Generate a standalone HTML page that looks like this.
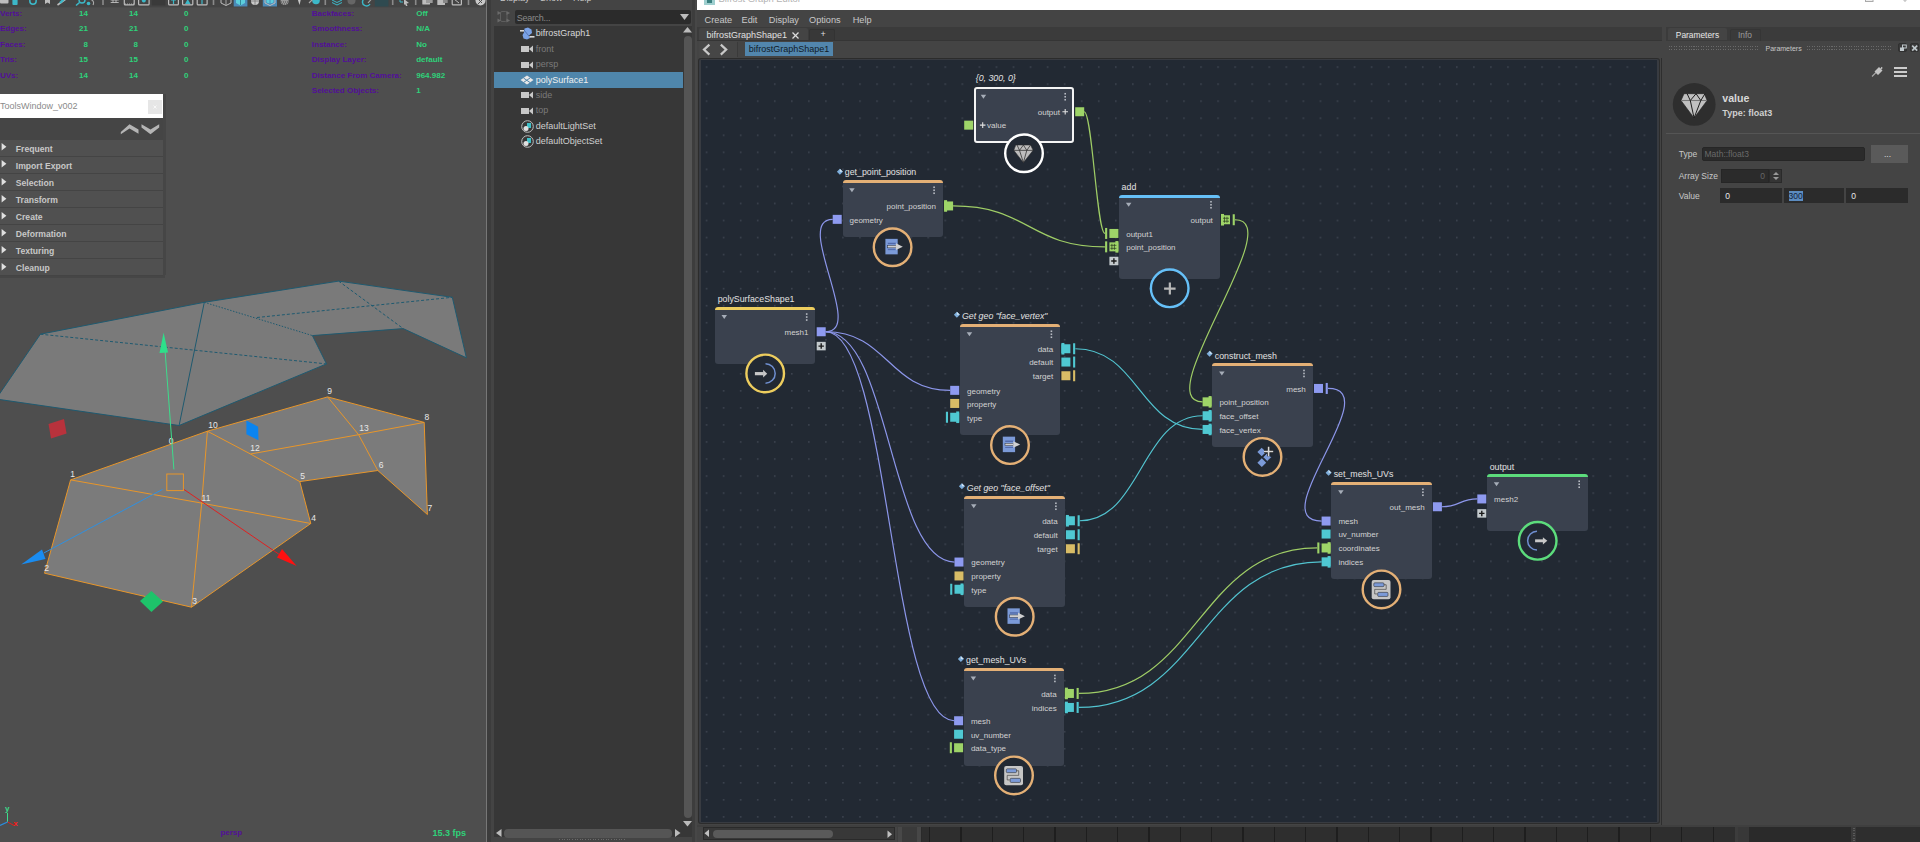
<!DOCTYPE html><html><head><meta charset="utf-8"><style>
*{margin:0;padding:0;box-sizing:border-box}
html,body{width:1920px;height:842px;overflow:hidden;background:#444;font-family:"Liberation Sans", sans-serif;}
.abs{position:absolute}
.t{position:absolute;white-space:nowrap;line-height:1}
</style></head><body>
<div class="abs" style="left:0px;top:0px;width:487px;height:842px;background:#4e4e4e;"></div>
<div class="abs" style="left:0px;top:0px;width:487px;height:7px;background:#444;"></div>
<div class="abs" style="left:0px;top:7px;width:487px;height:1px;background:#4a4a4a;"></div>
<svg class="abs" style="left:0;top:0" width="487" height="7"><rect x="0" y="-2" width="8.5" height="5.5" rx="1" fill="#bdbdbd"/><rect x="12.4" y="-2" width="5.200000000000001" height="7" rx="1" fill="#3cb8c8"/><circle cx="33" cy="1" r="3.2" fill="none" stroke="#3cb8c8" stroke-width="1.5"/><polygon points="45,-2 50,-2 50,4 47.5,2.5 45,4" fill="#bdbdbd"/><path d="M57.5,5 L66,-1" stroke="#bdbdbd" stroke-width="1.6"/><path d="M60,3 L65,-2" stroke="#3cb8c8" stroke-width="2.2"/><circle cx="82" cy="0" r="3" fill="none" stroke="#3cb8c8" stroke-width="1.4"/><path d="M79.5,2.5 L76,5.5" stroke="#3cb8c8" stroke-width="1.6"/><circle cx="88.5" cy="3.5" r="1.8" fill="#3cb8c8"/><path d="M90,-1 Q95,1 93,5" stroke="#aaa" stroke-width="1.1" fill="none"/><rect x="102.2" y="-1" width="1.6" height="6" fill="#8a8a8a"/><path d="M110.7,0 h8 M110.7,2.5 h8 M113,-2 v5 M116,-2 v5" stroke="#bdbdbd" stroke-width="0.9"/><rect x="124.3" y="-2" width="9.90000000000001" height="6.9" rx="1" fill="none" stroke="#bdbdbd" stroke-width="1.2"/><path d="M125,4 h9" stroke="#bdbdbd" stroke-width="0.8" stroke-dasharray="1,1"/><rect x="138.6" y="-2" width="10.49999999999999" height="6.9" rx="1" fill="none" stroke="#bdbdbd" stroke-width="1.2"/><circle cx="143.8" cy="0.5" r="2" fill="#3cb8c8"/><rect x="151.7" y="-2" width="13.700000000000017" height="7.5" rx="1" fill="#3a3a3a"/><rect x="168.6" y="-2" width="9.8" height="6.9" rx="1" fill="none" stroke="#bdbdbd" stroke-width="1.2"/><path d="M171,0 h5 M173.5,-2 v6" stroke="#3cb8c8" stroke-width="1.2"/><rect x="182.6" y="-2" width="10.200000000000006" height="6.9" rx="1" fill="none" stroke="#bdbdbd" stroke-width="1.2"/><polygon points="185,4 190.5,4 187.7,-1" fill="#3cb8c8"/><rect x="197.2" y="-2" width="9.899999999999995" height="6.9" rx="1" fill="none" stroke="#bdbdbd" stroke-width="1.2"/><path d="M199.5,-1 h5 M202,-1 v5" stroke="#3cb8c8" stroke-width="1.2"/><rect x="212.7" y="-1" width="1.6" height="6" fill="#8a8a8a"/><polygon points="221,-2 231,-2 231,3 226,5.5 221,3" fill="none" stroke="#bdbdbd" stroke-width="1"/><path d="M226,-2 v7" stroke="#bdbdbd" stroke-width="0.8"/><rect x="233.7" y="-2" width="13.700000000000017" height="8.5" rx="0" fill="#4a8ab8"/><polygon points="236,-2 245,-2 245,3 240.5,5.5 236,3" fill="#5ccfdc"/><path d="M240.5,-2 v7" stroke="#2a7a88" stroke-width="0.8"/><circle cx="255" cy="1" r="4" fill="#c8c8c8"/><path d="M255,-3 v8 M251,1 h8" stroke="#777" stroke-width="0.8"/><rect x="262.8" y="-2" width="14.199999999999989" height="8.5" rx="0" fill="#4a8ab8"/><polygon points="265,-2 275,-2 275,3 270,5.5 265,3" fill="none" stroke="#bdbdbd" stroke-width="1"/><polygon points="266.5,-1 269.5,-1 269.5,3.5 266.5,2.5" fill="#5ccfdc"/><polygon points="270.5,-1 273.5,-1 273.5,2.5 270.5,3.5" fill="#5ccfdc"/><circle cx="284.6" cy="1" r="4" fill="#9a9a9a"/><path d="M281,-1 h7 M281,2 h7 M282,4 h5" stroke="#444" stroke-width="0.9" stroke-dasharray="1,1"/><polygon points="297.3,-2 301.2,-2 299.5,5" fill="#c8c8c8"/><circle cx="316" cy="0.5" r="3.8" fill="#3cb8c8"/><path d="M309,3 L313,-1" stroke="#aaa" stroke-width="1.2"/><rect x="324.5" y="-1" width="1.6" height="6" fill="#8a8a8a"/><path d="M332,2.5 L337,5 L342,2.5 M332,0 L337,2.5 L342,0" stroke="#3cb8c8" stroke-width="1" fill="none"/><circle cx="351.5" cy="0.5" r="4" fill="#666"/><path d="M367,-2 A4,4 0 1 0 370,4" stroke="#3cb8c8" stroke-width="1.4" fill="none"/><path d="M368,3 L371.5,-1" stroke="#aaa" stroke-width="1.1"/><rect x="374.8" y="-2" width="13.599999999999966" height="8.5" rx="0" fill="#2f4a50"/><rect x="391.9" y="-1" width="1.6" height="6" fill="#8a8a8a"/><path d="M400,-1 v3 h3" stroke="#3cb8c8" stroke-width="1" fill="none"/><polygon points="404,-1 409,3 406.5,3.5 407.5,6 406,6 405,4 404,5" fill="#bdbdbd"/><rect x="414.9" y="-1" width="1.6" height="6" fill="#8a8a8a"/><rect x="422.3" y="-2" width="7.699999999999989" height="6.5" rx="0.5" fill="#bdbdbd"/><rect x="426" y="-2" width="6.699999999999989" height="5" rx="0.5" fill="#9a9a9a"/><rect x="437.3" y="-2" width="7.699999999999989" height="7" rx="0.5" fill="#bdbdbd"/><rect x="443" y="-2" width="4.699999999999989" height="5" rx="0.5" fill="#888"/><rect x="452.20000000000005" y="-2" width="9.199999999999978" height="6.9" rx="1" fill="none" stroke="#bdbdbd" stroke-width="1.2"/><path d="M454,-1 L459,3" stroke="#bdbdbd" stroke-width="1"/><rect x="467.7" y="-1" width="1.6" height="6" fill="#8a8a8a"/><circle cx="480.5" cy="0.5" r="5" fill="#c8c8c8"/><path d="M477,-2 L482,3 M484,-2 L478,4" stroke="#444" stroke-width="0.9"/></svg>
<div class="abs" style="left:486px;top:0px;width:1px;height:842px;background:#777;"></div>
<div class="abs" style="left:487px;top:0px;width:4px;height:842px;background:#3c3c3c;"></div>
<div class="abs" style="left:491px;top:0px;width:3px;height:842px;background:#444;"></div>
<svg class="abs" style="left:0;top:0" width="487" height="842" viewBox="0 0 487 842"><polygon points="-4,399 40.4,334.2 204.3,302.3 338.6,281.1 452.3,297.3 466.4,357.8 403.2,328.6 312.4,335.6 326.5,363.9 179.1,425.5" fill="#7a7a7a" stroke="#1f5a70" stroke-width="1"/><line x1="204.3" y1="302.3" x2="179.1" y2="425.5" stroke="#1f5a70" stroke-width="1"/><line x1="204.3" y1="302.3" x2="312.4" y2="335.6" stroke="#1f5a70" stroke-width="1" stroke-dasharray="1.5,1.5"/><line x1="338.6" y1="281.1" x2="403.2" y2="328.6" stroke="#1f5a70" stroke-width="1" stroke-dasharray="3,2"/><line x1="40.4" y1="334.2" x2="326.5" y2="363.9" stroke="#1f5a70" stroke-width="1" stroke-dasharray="3,2"/><line x1="257" y1="317.5" x2="452.3" y2="297.3" stroke="#1f5a70" stroke-width="1" stroke-dasharray="3,2"/><polygon points="70.6,479.9 207.4,431.2 327.6,396.9 424.2,422.4 427.4,514.5 377.8,470.5 299.8,481.6 310.8,523.5 191.5,607.2 44.5,573.2" fill="#7b7b7b" stroke="#e8962a" stroke-width="1"/><line x1="70.6" y1="479.9" x2="201.7" y2="503.1" stroke="#e8962a" stroke-width="1"/><line x1="201.7" y1="503.1" x2="310.8" y2="523.5" stroke="#e8962a" stroke-width="1"/><line x1="207.4" y1="431.2" x2="201.7" y2="503.1" stroke="#e8962a" stroke-width="1"/><line x1="201.7" y1="503.1" x2="191.5" y2="607.2" stroke="#e8962a" stroke-width="1"/><line x1="207.4" y1="431.2" x2="250.5" y2="454" stroke="#e8962a" stroke-width="1"/><line x1="250.5" y1="454" x2="299.8" y2="481.6" stroke="#e8962a" stroke-width="1"/><line x1="250.5" y1="454" x2="358.6" y2="434.7" stroke="#e8962a" stroke-width="1"/><line x1="358.6" y1="434.7" x2="424.2" y2="422.4" stroke="#e8962a" stroke-width="1"/><line x1="327.6" y1="396.9" x2="358.6" y2="434.7" stroke="#e8962a" stroke-width="1"/><line x1="358.6" y1="434.7" x2="377.8" y2="470.5" stroke="#e8962a" stroke-width="1"/><text x="171" y="444.4" font-size="8.5" fill="#e8e8e8" font-family="Liberation Sans" text-anchor="middle">0</text><text x="72.7" y="477.2" font-size="8.5" fill="#e8e8e8" font-family="Liberation Sans" text-anchor="middle">1</text><text x="46.6" y="570.7" font-size="8.5" fill="#e8e8e8" font-family="Liberation Sans" text-anchor="middle">2</text><text x="194.6" y="604" font-size="8.5" fill="#e8e8e8" font-family="Liberation Sans" text-anchor="middle">3</text><text x="313.7" y="520.5" font-size="8.5" fill="#e8e8e8" font-family="Liberation Sans" text-anchor="middle">4</text><text x="302.7" y="479.2" font-size="8.5" fill="#e8e8e8" font-family="Liberation Sans" text-anchor="middle">5</text><text x="381" y="468.1" font-size="8.5" fill="#e8e8e8" font-family="Liberation Sans" text-anchor="middle">6</text><text x="429.9" y="511.2" font-size="8.5" fill="#e8e8e8" font-family="Liberation Sans" text-anchor="middle">7</text><text x="426.8" y="419.5" font-size="8.5" fill="#e8e8e8" font-family="Liberation Sans" text-anchor="middle">8</text><text x="329.7" y="393.7" font-size="8.5" fill="#e8e8e8" font-family="Liberation Sans" text-anchor="middle">9</text><text x="212.9" y="427.8" font-size="8.5" fill="#e8e8e8" font-family="Liberation Sans" text-anchor="middle">10</text><text x="206" y="500.9" font-size="8.5" fill="#e8e8e8" font-family="Liberation Sans" text-anchor="middle">11</text><text x="254.9" y="451" font-size="8.5" fill="#e8e8e8" font-family="Liberation Sans" text-anchor="middle">12</text><text x="364" y="431.4" font-size="8.5" fill="#e8e8e8" font-family="Liberation Sans" text-anchor="middle">13</text><line x1="173.9" y1="469.4" x2="165" y2="350" stroke="#3ddc8c" stroke-width="1"/><polygon points="163.6,332.6 159.5,353 168,352.5" fill="#2ee08a"/><rect x="166.8" y="474" width="16.6" height="16.6" fill="none" stroke="#e8962a" stroke-width="1"/><line x1="162.5" y1="489.4" x2="43.8" y2="553" stroke="#2f90e0" stroke-width="1"/><polygon points="21.2,564.4 42,549.5 45.5,559" fill="#1a8cf0"/><line x1="183.9" y1="489.4" x2="278.9" y2="554.2" stroke="#e02020" stroke-width="1"/><polygon points="296.7,566 277,557.5 282,549" fill="#ff1010"/><polygon points="140,601 151.4,591 163,601.5 151.4,612" fill="#1ec36a"/><polygon points="48.5,424 64,419 66.6,433.6 51,438.6" fill="#b8323c"/><polygon points="246.4,420.6 258.1,426.7 258.5,440.2 246.4,434.3" fill="#0a84f0"/><line x1="7.5" y1="813" x2="7.5" y2="822" stroke="#3ddc8c" stroke-width="1"/><line x1="7.5" y1="822" x2="14" y2="825.5" stroke="#e02020" stroke-width="1"/><line x1="7.5" y1="822" x2="0" y2="825.5" stroke="#2a8ee0" stroke-width="1.2"/><text x="5" y="810.5" font-size="8" font-weight="700" fill="#3ddc8c" font-family="Liberation Sans">y</text><text x="13.2" y="825.5" font-size="8" font-weight="700" fill="#ff1a1a" font-family="Liberation Sans">x</text></svg>
<div class="t" style="left:0px;top:10.00px;font-size:8px;color:#520e98;font-weight:700;font-style:normal;height:8px;">Verts:</div>
<div class="t" style="right:1832px;top:10.00px;font-size:8px;color:#2ed27a;font-weight:700;font-style:normal;height:8px;text-align:right;">14</div>
<div class="t" style="right:1782px;top:10.00px;font-size:8px;color:#2ed27a;font-weight:700;font-style:normal;height:8px;text-align:right;">14</div>
<div class="t" style="right:1731.5px;top:10.00px;font-size:8px;color:#2ed27a;font-weight:700;font-style:normal;height:8px;text-align:right;">0</div>
<div class="t" style="left:0px;top:25.40px;font-size:8px;color:#520e98;font-weight:700;font-style:normal;height:8px;">Edges:</div>
<div class="t" style="right:1832px;top:25.40px;font-size:8px;color:#2ed27a;font-weight:700;font-style:normal;height:8px;text-align:right;">21</div>
<div class="t" style="right:1782px;top:25.40px;font-size:8px;color:#2ed27a;font-weight:700;font-style:normal;height:8px;text-align:right;">21</div>
<div class="t" style="right:1731.5px;top:25.40px;font-size:8px;color:#2ed27a;font-weight:700;font-style:normal;height:8px;text-align:right;">0</div>
<div class="t" style="left:0px;top:40.80px;font-size:8px;color:#520e98;font-weight:700;font-style:normal;height:8px;">Faces:</div>
<div class="t" style="right:1832px;top:40.80px;font-size:8px;color:#2ed27a;font-weight:700;font-style:normal;height:8px;text-align:right;">8</div>
<div class="t" style="right:1782px;top:40.80px;font-size:8px;color:#2ed27a;font-weight:700;font-style:normal;height:8px;text-align:right;">8</div>
<div class="t" style="right:1731.5px;top:40.80px;font-size:8px;color:#2ed27a;font-weight:700;font-style:normal;height:8px;text-align:right;">0</div>
<div class="t" style="left:0px;top:56.20px;font-size:8px;color:#520e98;font-weight:700;font-style:normal;height:8px;">Tris:</div>
<div class="t" style="right:1832px;top:56.20px;font-size:8px;color:#2ed27a;font-weight:700;font-style:normal;height:8px;text-align:right;">15</div>
<div class="t" style="right:1782px;top:56.20px;font-size:8px;color:#2ed27a;font-weight:700;font-style:normal;height:8px;text-align:right;">15</div>
<div class="t" style="right:1731.5px;top:56.20px;font-size:8px;color:#2ed27a;font-weight:700;font-style:normal;height:8px;text-align:right;">0</div>
<div class="t" style="left:0px;top:71.60px;font-size:8px;color:#520e98;font-weight:700;font-style:normal;height:8px;">UVs:</div>
<div class="t" style="right:1832px;top:71.60px;font-size:8px;color:#2ed27a;font-weight:700;font-style:normal;height:8px;text-align:right;">14</div>
<div class="t" style="right:1782px;top:71.60px;font-size:8px;color:#2ed27a;font-weight:700;font-style:normal;height:8px;text-align:right;">14</div>
<div class="t" style="right:1731.5px;top:71.60px;font-size:8px;color:#2ed27a;font-weight:700;font-style:normal;height:8px;text-align:right;">0</div>
<div class="t" style="left:311.8px;top:10.00px;font-size:8px;color:#520e98;font-weight:700;font-style:normal;height:8px;">Backfaces:</div>
<div class="t" style="left:416.2px;top:10.00px;font-size:8px;color:#2ed27a;font-weight:700;font-style:normal;height:8px;">Off</div>
<div class="t" style="left:311.8px;top:25.40px;font-size:8px;color:#520e98;font-weight:700;font-style:normal;height:8px;">Smoothness:</div>
<div class="t" style="left:416.2px;top:25.40px;font-size:8px;color:#2ed27a;font-weight:700;font-style:normal;height:8px;">N/A</div>
<div class="t" style="left:311.8px;top:40.80px;font-size:8px;color:#520e98;font-weight:700;font-style:normal;height:8px;">Instance:</div>
<div class="t" style="left:416.2px;top:40.80px;font-size:8px;color:#2ed27a;font-weight:700;font-style:normal;height:8px;">No</div>
<div class="t" style="left:311.8px;top:56.20px;font-size:8px;color:#520e98;font-weight:700;font-style:normal;height:8px;">Display Layer:</div>
<div class="t" style="left:416.2px;top:56.20px;font-size:8px;color:#2ed27a;font-weight:700;font-style:normal;height:8px;">default</div>
<div class="t" style="left:311.8px;top:71.60px;font-size:8px;color:#520e98;font-weight:700;font-style:normal;height:8px;">Distance From Camera:</div>
<div class="t" style="left:416.2px;top:71.60px;font-size:8px;color:#2ed27a;font-weight:700;font-style:normal;height:8px;">964.982</div>
<div class="t" style="left:311.8px;top:87.00px;font-size:8px;color:#520e98;font-weight:700;font-style:normal;height:8px;">Selected Objects:</div>
<div class="t" style="left:416.2px;top:87.00px;font-size:8px;color:#2ed27a;font-weight:700;font-style:normal;height:8px;">1</div>
<div class="t" style="left:220.4px;top:829.00px;font-size:8px;color:#520e98;font-weight:700;font-style:normal;height:8px;">persp</div>
<div class="t" style="left:432.5px;top:828.80px;font-size:9px;color:#2ed27a;font-weight:700;font-style:normal;height:9px;">15.3 fps</div>
<div class="abs" style="left:0px;top:94px;width:163px;height:24px;background:#ffffff;"></div>
<div class="t" style="left:0px;top:101.50px;font-size:9px;color:#8a8a8a;font-weight:400;font-style:normal;height:9px;">ToolsWindow_v002</div>
<div class="abs" style="left:148px;top:100px;width:14px;height:14px;background:#e6e6e6;"></div>
<svg class="abs" style="left:148px;top:100px" width="14" height="14"><path d="M5.5,5.5 L8.5,8.5 M8.5,5.5 L5.5,8.5" stroke="#f8f8f8" stroke-width="1"/></svg>
<div class="abs" style="left:163px;top:94px;width:2.5px;height:181px;background:rgba(0,0,0,0.10);"></div>
<div class="abs" style="left:0px;top:275px;width:165px;height:2.5px;background:rgba(0,0,0,0.10);"></div>
<div class="abs" style="left:0px;top:118px;width:163px;height:22px;background:#454545;"></div>
<svg class="abs" style="left:118px;top:122px" width="44" height="14"><polygon points="2.8,10 11.5,2.2 20.5,7.5 20.5,11.8 11.5,6.5 2.8,12.3" fill="#b5b5b5"/><polygon points="23.5,2.2 32.5,7.5 41.2,2.2 41.2,5.5 32.5,12.3 23.5,5.5" fill="#b5b5b5"/></svg>
<div class="abs" style="left:0px;top:140.0px;width:163px;height:16px;background:#505050;"></div>
<div class="abs" style="left:0px;top:156.0px;width:163px;height:1.05px;background:#444;"></div>
<svg class="abs" style="left:1px;top:143.4px" width="7" height="9"><polygon points="0.6,0 5.4,3.75 0.6,7.5" fill="#e0e0e0"/></svg>
<div class="t" style="left:15.8px;top:145.00px;font-size:8.6px;color:#c8c8c8;font-weight:700;font-style:normal;height:8.6px;">Frequent</div>
<div class="abs" style="left:0px;top:157.05px;width:163px;height:16px;background:#505050;"></div>
<div class="abs" style="left:0px;top:173.05px;width:163px;height:1.05px;background:#444;"></div>
<svg class="abs" style="left:1px;top:160.45000000000002px" width="7" height="9"><polygon points="0.6,0 5.4,3.75 0.6,7.5" fill="#e0e0e0"/></svg>
<div class="t" style="left:15.8px;top:162.05px;font-size:8.6px;color:#c8c8c8;font-weight:700;font-style:normal;height:8.6px;">Import Export</div>
<div class="abs" style="left:0px;top:174.1px;width:163px;height:16px;background:#505050;"></div>
<div class="abs" style="left:0px;top:190.1px;width:163px;height:1.05px;background:#444;"></div>
<svg class="abs" style="left:1px;top:177.5px" width="7" height="9"><polygon points="0.6,0 5.4,3.75 0.6,7.5" fill="#e0e0e0"/></svg>
<div class="t" style="left:15.8px;top:179.10px;font-size:8.6px;color:#c8c8c8;font-weight:700;font-style:normal;height:8.6px;">Selection</div>
<div class="abs" style="left:0px;top:191.15px;width:163px;height:16px;background:#505050;"></div>
<div class="abs" style="left:0px;top:207.15px;width:163px;height:1.05px;background:#444;"></div>
<svg class="abs" style="left:1px;top:194.55px" width="7" height="9"><polygon points="0.6,0 5.4,3.75 0.6,7.5" fill="#e0e0e0"/></svg>
<div class="t" style="left:15.8px;top:196.15px;font-size:8.6px;color:#c8c8c8;font-weight:700;font-style:normal;height:8.6px;">Transform</div>
<div class="abs" style="left:0px;top:208.2px;width:163px;height:16px;background:#505050;"></div>
<div class="abs" style="left:0px;top:224.2px;width:163px;height:1.05px;background:#444;"></div>
<svg class="abs" style="left:1px;top:211.6px" width="7" height="9"><polygon points="0.6,0 5.4,3.75 0.6,7.5" fill="#e0e0e0"/></svg>
<div class="t" style="left:15.8px;top:213.20px;font-size:8.6px;color:#c8c8c8;font-weight:700;font-style:normal;height:8.6px;">Create</div>
<div class="abs" style="left:0px;top:225.25px;width:163px;height:16px;background:#505050;"></div>
<div class="abs" style="left:0px;top:241.25px;width:163px;height:1.05px;background:#444;"></div>
<svg class="abs" style="left:1px;top:228.65px" width="7" height="9"><polygon points="0.6,0 5.4,3.75 0.6,7.5" fill="#e0e0e0"/></svg>
<div class="t" style="left:15.8px;top:230.25px;font-size:8.6px;color:#c8c8c8;font-weight:700;font-style:normal;height:8.6px;">Deformation</div>
<div class="abs" style="left:0px;top:242.3px;width:163px;height:16px;background:#505050;"></div>
<div class="abs" style="left:0px;top:258.3px;width:163px;height:1.05px;background:#444;"></div>
<svg class="abs" style="left:1px;top:245.70000000000002px" width="7" height="9"><polygon points="0.6,0 5.4,3.75 0.6,7.5" fill="#e0e0e0"/></svg>
<div class="t" style="left:15.8px;top:247.30px;font-size:8.6px;color:#c8c8c8;font-weight:700;font-style:normal;height:8.6px;">Texturing</div>
<div class="abs" style="left:0px;top:259.35px;width:163px;height:16px;background:#505050;"></div>
<div class="abs" style="left:0px;top:275.35px;width:163px;height:1.05px;background:#444;"></div>
<svg class="abs" style="left:1px;top:262.75px" width="7" height="9"><polygon points="0.6,0 5.4,3.75 0.6,7.5" fill="#e0e0e0"/></svg>
<div class="t" style="left:15.8px;top:264.35px;font-size:8.6px;color:#c8c8c8;font-weight:700;font-style:normal;height:8.6px;">Cleanup</div>
<div class="abs" style="left:494px;top:0px;width:202px;height:842px;background:#444;"></div>
<div class="t" style="left:500px;top:-6.00px;font-size:9px;color:#c8c8c8;font-weight:400;font-style:normal;height:9px;">Display</div>
<div class="t" style="left:540px;top:-6.00px;font-size:9px;color:#c8c8c8;font-weight:400;font-style:normal;height:9px;">Show</div>
<div class="t" style="left:573px;top:-6.00px;font-size:9px;color:#c8c8c8;font-weight:400;font-style:normal;height:9px;">Help</div>
<div class="abs" style="left:515px;top:10px;width:176px;height:14px;background:#2b2b2b;border-radius:2px"></div>
<div class="t" style="left:516.8px;top:13.90px;font-size:9px;color:#8a8a8a;font-weight:400;font-style:normal;height:9px;letter-spacing:-0.3px">Search...</div>
<svg class="abs" style="left:680px;top:14px" width="10" height="7"><polygon points="0,0 9,0 4.5,6" fill="#bbb"/></svg>
<svg class="abs" style="left:497px;top:9px" width="14" height="15"><rect x="3.5" y="2.5" width="6.5" height="10" rx="1.5" fill="none" stroke="#5e5e5e" stroke-width="1"/><polygon points="0.5,2 4,4 0.5,6" fill="#6a6a6a"/><polygon points="9.5,2 13,4 9.5,6" fill="#6a6a6a"/><polygon points="0.5,9.5 4,11.5 0.5,13.5" fill="#6a6a6a"/><polygon points="9.5,9.5 13,11.5 9.5,13.5" fill="#6a6a6a"/></svg>
<div class="abs" style="left:494px;top:26px;width:198.5px;height:811px;background:#373737;"></div>
<div class="abs" style="left:494px;top:72px;width:189px;height:15.5px;background:#4f86ab;"></div>
<div class="t" style="left:535.7px;top:29.30px;font-size:9px;color:#d8d8d8;font-weight:400;font-style:normal;height:9px;">bifrostGraph1</div>
<svg class="abs" style="left:520px;top:27.299999999999997px" width="15" height="13"><polygon points="4.5,1.5 8,0.5 11.5,2.5 12,6 9,8.5 10,11 7,12.5 3.5,11.5 2.5,8 4,5.5" fill="#7aa2e6"/><path d="M4,3 L10.5,11" stroke="#4a6aa8" stroke-width="0.8"/><rect x="0" y="3" width="4" height="1.6" fill="#d8d8d8"/><rect x="9.5" y="9" width="5" height="1.6" fill="#d8d8d8"/></svg>
<div class="t" style="left:535.7px;top:44.70px;font-size:9px;color:#7a7a7a;font-weight:400;font-style:normal;height:9px;">front</div>
<svg class="abs" style="left:521px;top:45.2px" width="13" height="8"><rect x="0" y="1" width="8" height="6" fill="#c8c8c8"/><polygon points="8,4 12,0.5 12,7.5" fill="#c8c8c8"/></svg>
<div class="t" style="left:535.7px;top:60.10px;font-size:9px;color:#7a7a7a;font-weight:400;font-style:normal;height:9px;">persp</div>
<svg class="abs" style="left:521px;top:60.599999999999994px" width="13" height="8"><rect x="0" y="1" width="8" height="6" fill="#c8c8c8"/><polygon points="8,4 12,0.5 12,7.5" fill="#c8c8c8"/></svg>
<div class="t" style="left:535.7px;top:75.50px;font-size:9px;color:#f0f0f0;font-weight:400;font-style:normal;height:9px;">polySurface1</div>
<svg class="abs" style="left:520px;top:75px" width="14" height="10"><polygon points="7,0.5 13.5,5 7,9.5 0.5,5" fill="#e8e8e8"/><line x1="3.5" y1="3" x2="10" y2="7.5" stroke="#4f86ab"/><line x1="10" y1="3" x2="3.5" y2="7.5" stroke="#4f86ab"/></svg>
<div class="t" style="left:535.7px;top:90.90px;font-size:9px;color:#7a7a7a;font-weight:400;font-style:normal;height:9px;">side</div>
<svg class="abs" style="left:521px;top:91.4px" width="13" height="8"><rect x="0" y="1" width="8" height="6" fill="#c8c8c8"/><polygon points="8,4 12,0.5 12,7.5" fill="#c8c8c8"/></svg>
<div class="t" style="left:535.7px;top:106.30px;font-size:9px;color:#7a7a7a;font-weight:400;font-style:normal;height:9px;">top</div>
<svg class="abs" style="left:521px;top:106.8px" width="13" height="8"><rect x="0" y="1" width="8" height="6" fill="#c8c8c8"/><polygon points="8,4 12,0.5 12,7.5" fill="#c8c8c8"/></svg>
<div class="t" style="left:535.7px;top:121.70px;font-size:9px;color:#d0d0d0;font-weight:400;font-style:normal;height:9px;">defaultLightSet</div>
<svg class="abs" style="left:521px;top:119.7px" width="13" height="13"><circle cx="6.5" cy="6.5" r="5.8" fill="none" stroke="#bdbdbd" stroke-width="1"/><polygon points="6,3 10,3 10,8 6,8" fill="#3ec0c8"/><circle cx="5" cy="8.5" r="2.5" fill="#e0e0e0"/></svg>
<div class="t" style="left:535.7px;top:137.10px;font-size:9px;color:#d0d0d0;font-weight:400;font-style:normal;height:9px;">defaultObjectSet</div>
<svg class="abs" style="left:521px;top:135.1px" width="13" height="13"><circle cx="6.5" cy="6.5" r="5.8" fill="none" stroke="#bdbdbd" stroke-width="1"/><polygon points="6,3 10,3 10,8 6,8" fill="#3ec0c8"/><circle cx="5" cy="8.5" r="2.5" fill="#e0e0e0"/></svg>
<div class="abs" style="left:684px;top:36px;width:8px;height:782px;background:#555;border-radius:4px"></div>
<svg class="abs" style="left:683px;top:27px" width="10" height="6"><polygon points="0,5.5 9,5.5 4.5,0" fill="#bbb"/></svg>
<svg class="abs" style="left:683px;top:821px" width="10" height="6"><polygon points="0,0 9,0 4.5,5.5" fill="#bbb"/></svg>
<div class="abs" style="left:559px;top:838.5px;width:66px;height:1px;background-image:repeating-linear-gradient(90deg,#6a6a6a 0 1px,transparent 1px 2.6px)"></div>
<div class="abs" style="left:503.6px;top:829px;width:168.7px;height:8.5px;background:#555;border-radius:4px"></div>
<svg class="abs" style="left:496px;top:829px" width="6" height="9"><polygon points="5.5,0 5.5,8 0,4" fill="#bbb"/></svg>
<svg class="abs" style="left:675px;top:829px" width="6" height="9"><polygon points="0,0 0,8 5.5,4" fill="#bbb"/></svg>
<div class="abs" style="left:692px;top:0px;width:2.7px;height:842px;background:#3d3d3d;"></div>
<div class="abs" style="left:694.7px;top:0px;width:2.6px;height:842px;background:#474747;"></div>
<div class="abs" style="left:697px;top:0px;width:1223px;height:10px;background:#ffffff;"></div>
<div class="t" style="left:718.5px;top:-5.70px;font-size:9.4px;color:#b4b4b4;font-weight:400;font-style:normal;height:9.4px;">Bifrost Graph Editor</div>
<svg class="abs" style="left:704px;top:0px" width="12" height="6"><rect x="0" y="0" width="11" height="5" fill="#9fcfcf"/><rect x="3" y="0" width="5" height="3" fill="#3a8080"/></svg>
<svg class="abs" style="left:1862px;top:0" width="58" height="6"><rect x="3.5" y="-3" width="7.5" height="4.5" fill="#eee" stroke="#aaa"/><line x1="40" y1="-2" x2="43" y2="1.5" stroke="#aaa"/><line x1="46" y1="-2" x2="43" y2="1.5" stroke="#aaa"/></svg>
<div class="abs" style="left:697px;top:10px;width:1223px;height:17px;background:#444;"></div>
<div class="t" style="left:704.6px;top:15.90px;font-size:9.2px;color:#c8c8c8;font-weight:400;font-style:normal;height:9.2px;">Create</div>
<div class="t" style="left:741.5px;top:15.90px;font-size:9.2px;color:#c8c8c8;font-weight:400;font-style:normal;height:9.2px;">Edit</div>
<div class="t" style="left:768.8px;top:15.90px;font-size:9.2px;color:#c8c8c8;font-weight:400;font-style:normal;height:9.2px;">Display</div>
<div class="t" style="left:809px;top:15.90px;font-size:9.2px;color:#c8c8c8;font-weight:400;font-style:normal;height:9.2px;">Options</div>
<div class="t" style="left:852.7px;top:15.90px;font-size:9.2px;color:#c8c8c8;font-weight:400;font-style:normal;height:9.2px;">Help</div>
<div class="abs" style="left:697px;top:27px;width:965px;height:13.5px;background:#3b3b3b;"></div>
<div class="abs" style="left:699px;top:28px;width:109px;height:12.5px;background:#444;border-radius:2px 2px 0 0"></div>
<div class="abs" style="left:809px;top:28.5px;width:26px;height:12px;background:#383838;border-radius:2px 2px 0 0;border:1px solid #333;border-bottom:none"></div>
<div class="t" style="left:706.5px;top:30.60px;font-size:9px;color:#e0e0e0;font-weight:400;font-style:normal;height:9px;">bifrostGraphShape1</div>
<svg class="abs" style="left:791px;top:30.5px" width="9" height="9"><line x1="1.5" y1="1.5" x2="7.5" y2="7.5" stroke="#ddd" stroke-width="1.3"/><line x1="7.5" y1="1.5" x2="1.5" y2="7.5" stroke="#ddd" stroke-width="1.3"/></svg>
<div class="t" style="left:820.5px;top:30.40px;font-size:9px;color:#ddd;font-weight:400;font-style:normal;height:9px;">+</div>
<div class="abs" style="left:697px;top:40.5px;width:965px;height:17px;background:#444;"></div>
<div class="abs" style="left:697px;top:39.6px;width:965px;height:1px;background:#353535;"></div>
<div class="abs" style="left:699px;top:40.5px;width:38px;height:17px;background:#464646;"></div>
<div class="abs" style="left:737px;top:41.5px;width:1px;height:15px;background:#3a3a3a;"></div>
<svg class="abs" style="left:701px;top:42px" width="30" height="14"><polyline points="8.4,2.6 3,7.6 8.4,12.6" fill="none" stroke="#c8c8c8" stroke-width="2.2"/><polyline points="19.8,2.6 25.2,7.6 19.8,12.6" fill="none" stroke="#c8c8c8" stroke-width="2.2"/></svg>
<div class="abs" style="left:745px;top:41.5px;width:87.6px;height:14.5px;background:#5286ad;"></div>
<div class="t" style="left:748.7px;top:45.00px;font-size:9px;color:#111a26;font-weight:400;font-style:normal;height:9px;">bifrostGraphShape1</div>
<div class="abs" style="left:697.2px;top:57.6px;width:964.8px;height:767px;background:#444;"></div>
<div class="abs" style="left:697.6px;top:58.1px;width:962px;height:766.4px;background:#2c2c2c;border-radius:3px"></div>
<div class="abs" style="left:698.8px;top:59.1px;width:959.8px;height:764px;background:#383b41;border-radius:2px"></div>
<div class="abs" style="left:700.8px;top:59.75px;width:956.6px;height:761.8px;background:#222933;"></div>
<div class="abs" style="left:1661px;top:57.5px;width:1px;height:769px;background:#2e2e2e;"></div>
<div class="abs" style="left:697px;top:824.5px;width:1223px;height:17.5px;background:#3f3f3f;"></div>
<div class="abs" style="left:697px;top:826.7px;width:200px;height:15.3px;background:#444;"></div>
<div class="abs" style="left:702.5px;top:826.7px;width:192px;height:13px;background:#2a2a2a;"></div>
<div class="abs" style="left:703.5px;top:828px;width:190px;height:11px;background:#383838;"></div>
<div class="abs" style="left:712.5px;top:829.5px;width:120px;height:8px;background:#5a5a5a;border-radius:4px"></div>
<svg class="abs" style="left:704px;top:829px" width="6" height="9"><polygon points="5,0.5 5,8 0.5,4.2" fill="#c0c0c0"/></svg>
<svg class="abs" style="left:886.5px;top:829.5px" width="6" height="9"><polygon points="0.5,0.5 0.5,8 5,4.2" fill="#c0c0c0"/></svg>
<div class="abs" style="left:897.5px;top:826.7px;width:4px;height:15.3px;background:#484848;"></div>
<div class="abs" style="left:901.5px;top:826.7px;width:15.5px;height:15.3px;background:#3a3a3a;"></div>
<div class="abs" style="left:917px;top:826.7px;width:3.5px;height:15.3px;background:#474747;"></div>
<div class="abs" style="left:920.5px;top:826.7px;width:1px;height:15.3px;background:#2a2a2a;"></div>
<div class="abs" style="left:921.5px;top:826.7px;width:998.5px;height:15.3px;background:#2e2e2e;"></div>
<div class="abs" style="left:929.0px;top:826.7px;width:1.2px;height:15.3px;background:#1e1e1e;"></div>
<div class="abs" style="left:960.34px;top:826.7px;width:1.2px;height:15.3px;background:#1e1e1e;"></div>
<div class="abs" style="left:991.68px;top:826.7px;width:1.2px;height:15.3px;background:#1e1e1e;"></div>
<div class="abs" style="left:1023.02px;top:826.7px;width:1.2px;height:15.3px;background:#1e1e1e;"></div>
<div class="abs" style="left:1054.36px;top:826.7px;width:1.2px;height:15.3px;background:#1e1e1e;"></div>
<div class="abs" style="left:1085.7px;top:826.7px;width:1.2px;height:15.3px;background:#1e1e1e;"></div>
<div class="abs" style="left:1117.04px;top:826.7px;width:1.2px;height:15.3px;background:#1e1e1e;"></div>
<div class="abs" style="left:1148.38px;top:826.7px;width:1.2px;height:15.3px;background:#1e1e1e;"></div>
<div class="abs" style="left:1179.72px;top:826.7px;width:1.2px;height:15.3px;background:#1e1e1e;"></div>
<div class="abs" style="left:1211.06px;top:826.7px;width:1.2px;height:15.3px;background:#1e1e1e;"></div>
<div class="abs" style="left:1242.4px;top:826.7px;width:1.2px;height:15.3px;background:#1e1e1e;"></div>
<div class="abs" style="left:1273.74px;top:826.7px;width:1.2px;height:15.3px;background:#1e1e1e;"></div>
<div class="abs" style="left:1305.08px;top:826.7px;width:1.2px;height:15.3px;background:#1e1e1e;"></div>
<div class="abs" style="left:1336.42px;top:826.7px;width:1.2px;height:15.3px;background:#1e1e1e;"></div>
<div class="abs" style="left:1367.76px;top:826.7px;width:1.2px;height:15.3px;background:#1e1e1e;"></div>
<div class="abs" style="left:1399.1px;top:826.7px;width:1.2px;height:15.3px;background:#1e1e1e;"></div>
<div class="abs" style="left:1430.44px;top:826.7px;width:1.2px;height:15.3px;background:#1e1e1e;"></div>
<div class="abs" style="left:1461.78px;top:826.7px;width:1.2px;height:15.3px;background:#1e1e1e;"></div>
<div class="abs" style="left:1493.12px;top:826.7px;width:1.2px;height:15.3px;background:#1e1e1e;"></div>
<div class="abs" style="left:1524.46px;top:826.7px;width:1.2px;height:15.3px;background:#1e1e1e;"></div>
<div class="abs" style="left:1555.8px;top:826.7px;width:1.2px;height:15.3px;background:#1e1e1e;"></div>
<div class="abs" style="left:1587.1399999999999px;top:826.7px;width:1.2px;height:15.3px;background:#1e1e1e;"></div>
<div class="abs" style="left:1618.48px;top:826.7px;width:1.2px;height:15.3px;background:#1e1e1e;"></div>
<div class="abs" style="left:1649.8200000000002px;top:826.7px;width:1.2px;height:15.3px;background:#1e1e1e;"></div>
<div class="abs" style="left:1681.1599999999999px;top:826.7px;width:1.2px;height:15.3px;background:#1e1e1e;"></div>
<div class="abs" style="left:1712.5px;top:826.7px;width:1.2px;height:15.3px;background:#1e1e1e;"></div>
<div class="abs" style="left:1735px;top:826.7px;width:3px;height:15.3px;background:#3c3c3c;"></div>
<div class="abs" style="left:1738px;top:826.7px;width:11px;height:15.3px;background:#383838;"></div>
<div class="abs" style="left:1749px;top:826.7px;width:102px;height:15.3px;background:#2a2a2a;"></div>
<div class="abs" style="left:1851px;top:826.7px;width:5px;height:15.3px;background:#3a3a3a;"></div>
<div class="abs" style="left:1852.5px;top:828px;width:2px;height:13px;background-image:repeating-linear-gradient(180deg,#5a5a5a 0 1px,transparent 1px 2.5px)"></div>
<div class="abs" style="left:1856px;top:826.7px;width:64px;height:15.3px;background:#2e2e2e;"></div>
<div class="abs" style="left:1662px;top:26.5px;width:258px;height:798px;background:#444;"></div>
<div class="abs" style="left:1666px;top:26.5px;width:254px;height:14px;background:#3b3b3b;"></div>
<div class="abs" style="left:1668px;top:28.3px;width:59px;height:12.2px;background:#444;border-radius:2px 2px 0 0"></div>
<div class="abs" style="left:1730px;top:29px;width:31px;height:11.5px;background:#3a3a3a;border:1px solid #353535;border-bottom:none;border-radius:2px 2px 0 0"></div>
<div class="t" style="left:1675.8px;top:30.60px;font-size:8.4px;color:#e8e8e8;font-weight:400;font-style:normal;height:8.4px;">Parameters</div>
<div class="t" style="left:1738px;top:30.60px;font-size:8.4px;color:#9a9a9a;font-weight:400;font-style:normal;height:8.4px;">Info</div>
<div class="abs" style="left:1668.7px;top:46px;width:90.09999999999991px;height:4px;background-image:repeating-linear-gradient(90deg,transparent 0 1px,#444 1px 2.45px),repeating-linear-gradient(180deg,#6a6a6a 0 1px,transparent 1px 3px)"></div>
<div class="abs" style="left:1807px;top:46px;width:86.29999999999995px;height:4px;background-image:repeating-linear-gradient(90deg,transparent 0 1px,#444 1px 2.45px),repeating-linear-gradient(180deg,#6a6a6a 0 1px,transparent 1px 3px)"></div>
<div class="t" style="left:1765.5px;top:45.00px;font-size:7px;color:#c8c8c8;font-weight:400;font-style:normal;height:7px;">Parameters</div>
<div class="abs" style="left:1898.2px;top:42.6px;width:9.3px;height:9.6px;background:#3a3a3a;border-radius:2px;border:1px solid #303030"></div>
<div class="abs" style="left:1910px;top:42.6px;width:9px;height:9.6px;background:#3a3a3a;border-radius:2px;border:1px solid #303030"></div>
<svg class="abs" style="left:1898px;top:42.6px" width="22" height="10"><rect x="2" y="4.5" width="4" height="3.5" fill="#c0c8cc"/><rect x="4.5" y="2" width="3.8" height="3" fill="none" stroke="#c0c8cc" stroke-width="1"/><line x1="14.2" y1="2.6" x2="19.2" y2="7.6" stroke="#c0c8cc" stroke-width="1.6"/><line x1="19.2" y1="2.6" x2="14.2" y2="7.6" stroke="#c0c8cc" stroke-width="1.6"/></svg>
<svg class="abs" style="left:1870px;top:64px" width="14" height="14"><line x1="2" y1="12.5" x2="6" y2="8.5" stroke="#aaa" stroke-width="1.1"/><polygon points="4.5,7.5 9,3 10.5,4.5 11.5,2.8 12.8,4.1 11.2,5.2 12.5,6.5 8,11" fill="#c4c4c4"/></svg>
<div class="abs" style="left:1894.2px;top:67px;width:12.8px;height:2px;background:#cccccc;"></div>
<div class="abs" style="left:1894.2px;top:71px;width:12.8px;height:2px;background:#cccccc;"></div>
<div class="abs" style="left:1894.2px;top:75px;width:12.8px;height:2px;background:#cccccc;"></div>
<svg class="abs" style="left:1672px;top:83px" width="44" height="44"><circle cx="22.2" cy="21.4" r="21.4" fill="#2e2e2e"/><polygon points="12,10.7 32.4,10.7 35.1,17.5 22.05,35 9,17.5" fill="#c0c0c0" stroke="#1e1e1e" stroke-width="0.6"/><path d="M9,17.5 H35.1" stroke="#777" stroke-width="1.1" fill="none"/><polyline points="15.1,10.7 18.3,17.5 24.05,10.7 28.8,17.5 33,10.7" stroke="#1e1e1e" stroke-width="1" fill="none"/><polyline points="18.3,17.5 22.05,35 28.8,17.5" stroke="#1e1e1e" stroke-width="1" fill="none"/></svg>
<div class="t" style="left:1722.3px;top:92.60px;font-size:10.6px;color:#d8d8d8;font-weight:700;font-style:normal;height:10.6px;">value</div>
<div class="t" style="left:1722.3px;top:109.10px;font-size:9px;color:#d0d0d0;font-weight:700;font-style:normal;height:9px;">Type: float3</div>
<div class="abs" style="left:1666px;top:132.5px;width:254px;height:1px;background:#555;"></div>
<div class="t" style="left:1678.7px;top:150.35px;font-size:8.5px;color:#c8c8c8;font-weight:400;font-style:normal;height:8.5px;">Type</div>
<div class="abs" style="left:1702px;top:146.8px;width:163px;height:14.6px;background:#2b2b2b;border-radius:2px;border:1px solid #262626"></div>
<div class="t" style="left:1704.5px;top:150.05px;font-size:8.5px;color:#6a6a6a;font-weight:400;font-style:normal;height:8.5px;">Math::float3</div>
<div class="abs" style="left:1871px;top:145.2px;width:37.2px;height:18px;background:#5a5a5a;"></div>
<div class="t" style="left:1884px;top:149.75px;font-size:8.5px;color:#ddd;font-weight:400;font-style:normal;height:8.5px;">...</div>
<div class="t" style="left:1678.7px;top:172.05px;font-size:8.5px;color:#c8c8c8;font-weight:400;font-style:normal;height:8.5px;">Array Size</div>
<div class="abs" style="left:1721px;top:168.5px;width:48.3px;height:14.3px;background:#2b2b2b;border:1px solid #262626"></div>
<div class="t" style="right:155px;top:171.75px;font-size:8.5px;color:#666;font-weight:400;font-style:normal;height:8.5px;text-align:right;">0</div>
<div class="abs" style="left:1769.3px;top:168.5px;width:12.5px;height:14.3px;background:#353535;border:1px solid #2a2a2a"></div>
<svg class="abs" style="left:1771px;top:169.5px" width="10" height="12"><polygon points="2,5 8,5 5,2" fill="#999"/><polygon points="2,7 8,7 5,10" fill="#999"/></svg>
<div class="t" style="left:1678.7px;top:192.15px;font-size:8.5px;color:#c8c8c8;font-weight:400;font-style:normal;height:8.5px;">Value</div>
<div class="abs" style="left:1720.2px;top:188px;width:61.59999999999991px;height:15.2px;background:#2b2b2b;"></div>
<div class="t" style="left:1725.2px;top:191.95px;font-size:8.5px;color:#e8e8e8;font-weight:400;font-style:normal;height:8.5px;">0</div>
<div class="abs" style="left:1783.6px;top:188px;width:60.90000000000009px;height:15.2px;background:#2b2b2b;"></div>
<div class="abs" style="left:1788.6px;top:190.5px;width:14.5px;height:10.5px;background:#5c8cc0;"></div>
<div class="t" style="left:1788.6px;top:191.95px;font-size:8.5px;color:#11223a;font-weight:400;font-style:normal;height:8.5px;">300</div>
<div class="abs" style="left:1846.3px;top:188px;width:61.90000000000009px;height:15.2px;background:#2b2b2b;"></div>
<div class="t" style="left:1851.3px;top:191.95px;font-size:8.5px;color:#e8e8e8;font-weight:400;font-style:normal;height:8.5px;">0</div>
<svg class="abs" style="left:700.8px;top:59.75px" width="956.6" height="761.8" viewBox="700.8 59.75 956.6 761.8"><defs><pattern id="dots" x="705.54" y="66.04" width="17.052" height="17.041" patternUnits="userSpaceOnUse"><rect x="0.1" y="0.1" width="1.4" height="1.4" fill="#434a56"/></pattern></defs><rect x="700.8" y="59.75" width="956.6" height="761.8" fill="url(#dots)"/><path d="M1084,111.5 C1092,111.5 1096.7,233.2 1104.7,233.2" fill="none" stroke="#9fcd66" stroke-width="1.2"/><path d="M952.9,205.7 C1028.8,205.7 1028.8,246.6 1104.7,246.6" fill="none" stroke="#9fcd66" stroke-width="1.2"/><path d="M825.5,331.5 C865.5,331.5 792.5,219.1 832.5,219.1" fill="none" stroke="#8c96ea" stroke-width="1.2"/><path d="M825.5,331.5 C887.75,331.5 887.75,390.09999999999997 950,390.09999999999997" fill="none" stroke="#8c96ea" stroke-width="1.2"/><path d="M825.5,331.5 C889.9,331.5 889.9,561.8000000000001 954.3,561.8000000000001" fill="none" stroke="#8c96ea" stroke-width="1.2"/><path d="M825.5,331.5 C889.7,331.5 889.7,720.5 953.9,720.5" fill="none" stroke="#8c96ea" stroke-width="1.2"/><path d="M1234.8,219.5 C1289.8,219.5 1147.4,401.59999999999997 1202.4,401.59999999999997" fill="none" stroke="#9fcd66" stroke-width="1.2"/><path d="M1075.2,348.5 C1138.8000000000002,348.5 1138.8000000000002,429.2 1202.4,429.2" fill="none" stroke="#52c4d0" stroke-width="1.2"/><path d="M1079.7,520.5 C1141.0500000000002,520.5 1141.0500000000002,415.5 1202.4,415.5" fill="none" stroke="#52c4d0" stroke-width="1.2"/><path d="M1327.8000000000002,388.2 C1387.8000000000002,388.2 1261.4,520.8000000000001 1321.4,520.8000000000001" fill="none" stroke="#8c96ea" stroke-width="1.2"/><path d="M1078.7,693.2 C1197.8000000000002,693.2 1197.8000000000002,547.7 1316.9,547.7" fill="none" stroke="#9fcd66" stroke-width="1.2"/><path d="M1078.7,707.2 C1200.0500000000002,707.2 1200.0500000000002,561.6 1321.4,561.6" fill="none" stroke="#52c4d0" stroke-width="1.2"/><path d="M1441.7,506.5 C1459.4,506.5 1459.4,498.7 1477.1,498.7" fill="none" stroke="#8c96ea" stroke-width="1.2"/></svg>
<div class="abs" style="left:974px;top:86.5px;width:100px;height:56.5px;background:#3a414e;border:2px solid #f4f4f4;border-radius:3px"></div>
<div class="t" style="left:975.7px;top:74.10px;font-size:8.8px;color:#e2e2e2;font-weight:400;font-style:italic;height:8.8px;">{0, 300, 0}</div>
<div class="t" style="right:860px;top:109.00px;font-size:8px;color:#d2d2d2;font-weight:400;font-style:normal;height:8px;text-align:right;">output</div>
<div class="t" style="left:987px;top:122.40px;font-size:8px;color:#d2d2d2;font-weight:400;font-style:normal;height:8px;">value</div>
<div class="abs" style="left:1119.2px;top:194.5px;width:100.6px;height:84px;background:#3a414e;border-top:3px solid #66c0f8;border-radius:3px"></div>
<div class="t" style="left:1121.6px;top:183.10px;font-size:8.8px;color:#e2e2e2;font-weight:400;font-style:normal;height:8.8px;">add</div>
<div class="t" style="right:707.2px;top:217.00px;font-size:8px;color:#d2d2d2;font-weight:400;font-style:normal;height:8px;text-align:right;">output</div>
<div class="t" style="left:1126.2px;top:230.70px;font-size:8px;color:#d2d2d2;font-weight:400;font-style:normal;height:8px;">output1</div>
<div class="t" style="left:1126.2px;top:244.10px;font-size:8px;color:#d2d2d2;font-weight:400;font-style:normal;height:8px;">point_position</div>
<div class="abs" style="left:842.5px;top:180px;width:100.4px;height:57px;background:#3a414e;border-top:3px solid #e4b076;border-radius:3px"></div>
<div class="t" style="left:844.8px;top:168.40px;font-size:8.8px;color:#e2e2e2;font-weight:400;font-style:normal;height:8.8px;">get_point_position</div>
<div class="t" style="right:984.1px;top:203.20px;font-size:8px;color:#d2d2d2;font-weight:400;font-style:normal;height:8px;text-align:right;">point_position</div>
<div class="t" style="left:849.5px;top:216.60px;font-size:8px;color:#d2d2d2;font-weight:400;font-style:normal;height:8px;">geometry</div>
<div class="abs" style="left:714.8px;top:306.8px;width:100.7px;height:57px;background:#3a414e;border-top:3px solid #edcd5e;border-radius:3px"></div>
<div class="t" style="left:717.7px;top:295.30px;font-size:8.8px;color:#e2e2e2;font-weight:400;font-style:normal;height:8.8px;">polySurfaceShape1</div>
<div class="t" style="right:1111.5px;top:329.00px;font-size:8px;color:#d2d2d2;font-weight:400;font-style:normal;height:8px;text-align:right;">mesh1</div>
<div class="abs" style="left:960px;top:324px;width:100.2px;height:110.7px;background:#3a414e;border-top:3px solid #e4b076;border-radius:3px"></div>
<div class="t" style="left:962px;top:312.30px;font-size:8.8px;color:#e2e2e2;font-weight:400;font-style:italic;height:8.8px;">Get geo "face_vertex"</div>
<div class="t" style="right:866.8px;top:346.00px;font-size:8px;color:#d2d2d2;font-weight:400;font-style:normal;height:8px;text-align:right;">data</div>
<div class="t" style="right:866.8px;top:359.30px;font-size:8px;color:#d2d2d2;font-weight:400;font-style:normal;height:8px;text-align:right;">default</div>
<div class="t" style="right:866.8px;top:373.00px;font-size:8px;color:#d2d2d2;font-weight:400;font-style:normal;height:8px;text-align:right;">target</div>
<div class="t" style="left:967px;top:387.60px;font-size:8px;color:#d2d2d2;font-weight:400;font-style:normal;height:8px;">geometry</div>
<div class="t" style="left:967px;top:400.70px;font-size:8px;color:#d2d2d2;font-weight:400;font-style:normal;height:8px;">property</div>
<div class="t" style="left:967px;top:414.50px;font-size:8px;color:#d2d2d2;font-weight:400;font-style:normal;height:8px;">type</div>
<div class="abs" style="left:964.3px;top:496px;width:100.4px;height:110.9px;background:#3a414e;border-top:3px solid #e4b076;border-radius:3px"></div>
<div class="t" style="left:966.8px;top:483.80px;font-size:8.8px;color:#e2e2e2;font-weight:400;font-style:italic;height:8.8px;">Get geo "face_offset"</div>
<div class="t" style="right:862.3px;top:518.00px;font-size:8px;color:#d2d2d2;font-weight:400;font-style:normal;height:8px;text-align:right;">data</div>
<div class="t" style="right:862.3px;top:532.00px;font-size:8px;color:#d2d2d2;font-weight:400;font-style:normal;height:8px;text-align:right;">default</div>
<div class="t" style="right:862.3px;top:546.00px;font-size:8px;color:#d2d2d2;font-weight:400;font-style:normal;height:8px;text-align:right;">target</div>
<div class="t" style="left:971.3px;top:559.30px;font-size:8px;color:#d2d2d2;font-weight:400;font-style:normal;height:8px;">geometry</div>
<div class="t" style="left:971.3px;top:573.20px;font-size:8px;color:#d2d2d2;font-weight:400;font-style:normal;height:8px;">property</div>
<div class="t" style="left:971.3px;top:586.50px;font-size:8px;color:#d2d2d2;font-weight:400;font-style:normal;height:8px;">type</div>
<div class="abs" style="left:963.9px;top:668.2px;width:99.8px;height:97.5px;background:#3a414e;border-top:3px solid #e4b076;border-radius:3px"></div>
<div class="t" style="left:966px;top:656.30px;font-size:8.8px;color:#e2e2e2;font-weight:400;font-style:normal;height:8.8px;">get_mesh_UVs</div>
<div class="t" style="right:863.3px;top:690.70px;font-size:8px;color:#d2d2d2;font-weight:400;font-style:normal;height:8px;text-align:right;">data</div>
<div class="t" style="right:863.3px;top:704.70px;font-size:8px;color:#d2d2d2;font-weight:400;font-style:normal;height:8px;text-align:right;">indices</div>
<div class="t" style="left:970.9px;top:718.00px;font-size:8px;color:#d2d2d2;font-weight:400;font-style:normal;height:8px;">mesh</div>
<div class="t" style="left:970.9px;top:731.50px;font-size:8px;color:#d2d2d2;font-weight:400;font-style:normal;height:8px;">uv_number</div>
<div class="t" style="left:970.9px;top:745.00px;font-size:8px;color:#d2d2d2;font-weight:400;font-style:normal;height:8px;">data_type</div>
<div class="abs" style="left:1212.4px;top:363.2px;width:100.4px;height:83.8px;background:#3a414e;border-top:3px solid #e4b076;border-radius:3px"></div>
<div class="t" style="left:1214.8px;top:351.60px;font-size:8.8px;color:#e2e2e2;font-weight:400;font-style:normal;height:8.8px;">construct_mesh</div>
<div class="t" style="right:614.1999999999998px;top:385.70px;font-size:8px;color:#d2d2d2;font-weight:400;font-style:normal;height:8px;text-align:right;">mesh</div>
<div class="t" style="left:1219.4px;top:399.10px;font-size:8px;color:#d2d2d2;font-weight:400;font-style:normal;height:8px;">point_position</div>
<div class="t" style="left:1219.4px;top:413.00px;font-size:8px;color:#d2d2d2;font-weight:400;font-style:normal;height:8px;">face_offset</div>
<div class="t" style="left:1219.4px;top:426.70px;font-size:8px;color:#d2d2d2;font-weight:400;font-style:normal;height:8px;">face_vertex</div>
<div class="abs" style="left:1331.4px;top:482px;width:100.3px;height:97.4px;background:#3a414e;border-top:3px solid #e4b076;border-radius:3px"></div>
<div class="t" style="left:1333.7px;top:470.20px;font-size:8.8px;color:#e2e2e2;font-weight:400;font-style:normal;height:8.8px;">set_mesh_UVs</div>
<div class="t" style="right:495.29999999999995px;top:504.00px;font-size:8px;color:#d2d2d2;font-weight:400;font-style:normal;height:8px;text-align:right;">out_mesh</div>
<div class="t" style="left:1338.4px;top:518.30px;font-size:8px;color:#d2d2d2;font-weight:400;font-style:normal;height:8px;">mesh</div>
<div class="t" style="left:1338.4px;top:531.30px;font-size:8px;color:#d2d2d2;font-weight:400;font-style:normal;height:8px;">uv_number</div>
<div class="t" style="left:1338.4px;top:545.20px;font-size:8px;color:#d2d2d2;font-weight:400;font-style:normal;height:8px;">coordinates</div>
<div class="t" style="left:1338.4px;top:559.10px;font-size:8px;color:#d2d2d2;font-weight:400;font-style:normal;height:8px;">indices</div>
<div class="abs" style="left:1487.1px;top:474px;width:100.9px;height:57px;background:#3a414e;border-top:3px solid #5cdc7c;border-radius:3px"></div>
<div class="t" style="left:1489.7px;top:462.60px;font-size:8.8px;color:#e2e2e2;font-weight:400;font-style:normal;height:8.8px;">output</div>
<div class="t" style="left:1494.1px;top:496.20px;font-size:8px;color:#d2d2d2;font-weight:400;font-style:normal;height:8px;">mesh2</div>
<svg class="abs" style="left:700.8px;top:59.75px" width="956.6" height="761.8" viewBox="700.8 59.75 956.6 761.8"><polygon points="980.5,94.5 986,94.5 983.25,98.5" fill="#a6adb8"/><rect x="1064.2" y="92.7" width="1.6" height="1.6" fill="#b8bcc4"/><rect x="1064.2" y="95.7" width="1.6" height="1.6" fill="#b8bcc4"/><rect x="1064.2" y="98.7" width="1.6" height="1.6" fill="#b8bcc4"/><rect x="1075" y="107.0" width="9" height="9" fill="#9ed468"/><path d="M1062.2,111.5 h5.6 M1065,108.7 v5.6" stroke="#e0e0e0" stroke-width="1.1"/><rect x="964" y="120.4" width="9" height="9" fill="#9ed468"/><path d="M979.7,124.9 h5.6 M982.5,122.10000000000001 v5.6" stroke="#e0e0e0" stroke-width="1.1"/><circle cx="1023.8" cy="153" r="18.8" fill="#222933" stroke="#ffffff" stroke-width="2.4"/><g transform="translate(1023.8,153)"><polygon points="-8.2,-8.2 6.5,-8.2 9.1,-2.9 -0.6,9.3 -10.2,-2.9" fill="#bdbdbd" stroke="#2a2a2a" stroke-width="0.5"/><path d="M-10.2,-2.9 H9.1 M-6.9,-8.2 L-4.5,-2.9 L-0.6,-8.2 L2.8,-2.9 L6.5,-8.2 M-4.5,-2.9 L-0.6,9.3 L2.8,-2.9" stroke="#333" stroke-width="0.8" fill="none"/></g><polygon points="1125.7,202.5 1131.2,202.5 1128.45,206.5" fill="#a6adb8"/><rect x="1210.0" y="200.7" width="1.6" height="1.6" fill="#b8bcc4"/><rect x="1210.0" y="203.7" width="1.6" height="1.6" fill="#b8bcc4"/><rect x="1210.0" y="206.7" width="1.6" height="1.6" fill="#b8bcc4"/><rect x="1220.8" y="215.0" width="9" height="9" fill="#9ed468"/><rect x="1220.8" y="213.7" width="3" height="11.6" fill="#9ed468"/><path d="M1224.3,216.5 v6 M1226.8,216.5 v6 M1222.8,218.0 h6 M1222.8,221.0 h6" stroke="#2a3a20" stroke-width="0.7"/><rect x="1232.5" y="214.0" width="2.1" height="11" fill="#9ed468"/><rect x="1109.2" y="228.7" width="9" height="9" fill="#9ed468"/><rect x="1104.9" y="227.7" width="2.1" height="11" fill="#9ed468"/><rect x="1109.2" y="242.1" width="9" height="9" fill="#9ed468"/><rect x="1115.2" y="240.79999999999998" width="3" height="11.6" fill="#9ed468"/><path d="M1111.7,243.6 v6 M1114.2,243.6 v6 M1110.2,245.1 h6 M1110.2,248.1 h6" stroke="#2a3a20" stroke-width="0.7"/><rect x="1104.9" y="241.1" width="2.1" height="11" fill="#9ed468"/><rect x="1109.2" y="256.5" width="9" height="8.5" fill="#c4cacd"/><path d="M1111.0,260.75 h5.4 M1113.7,258.0 v5.5" stroke="#1a1a1a" stroke-width="1.4"/><circle cx="1169.5" cy="288.1" r="18.8" fill="#222933" stroke="#66c0f8" stroke-width="2.4"/><g transform="translate(1169.5,288.1)"><path d="M-5.6,0.2 h11.5 M0.15,-5.8 v12" stroke="#b8b8b8" stroke-width="2.2"/></g><polygon points="849.0,188 854.5,188 851.75,192" fill="#a6adb8"/><rect x="933.1" y="186.2" width="1.6" height="1.6" fill="#b8bcc4"/><rect x="933.1" y="189.2" width="1.6" height="1.6" fill="#b8bcc4"/><rect x="933.1" y="192.2" width="1.6" height="1.6" fill="#b8bcc4"/><rect x="943.9" y="201.2" width="9" height="9" fill="#9ed468"/><rect x="943.9" y="199.89999999999998" width="3" height="11.6" fill="#9ed468"/><rect x="832.5" y="214.6" width="9" height="9" fill="#8e9af0"/><polygon points="839.7,168.4 842.7,171.4 839.7,174.4 836.7,171.4" fill="#7eaedc"/><polygon points="839.7,168.4 842.7,171.4 839.7,171.4" fill="#cfe4f5"/><circle cx="892.4" cy="247" r="18.8" fill="#222933" stroke="#e4b076" stroke-width="2.4"/><g transform="translate(892.4,247)"><rect x="-7.2" y="-8.4" width="12.3" height="15.5" fill="#7b9ad8"/><path d="M-4.8,-3.8 h8" stroke="#5068a8" stroke-width="1.4"/><path d="M-4.8,2.4 h8" stroke="#5068a8" stroke-width="1"/><rect x="-5" y="-1.8" width="8.6" height="2.4" fill="#d0d0d0" stroke="#2a2f3a" stroke-width="0.5"/><polygon points="3.3,-3.9 10.2,-0.6 3.3,2.7" fill="#d0d0d0"/></g><polygon points="721.3,314.8 726.8,314.8 724.05,318.8" fill="#a6adb8"/><rect x="805.7" y="313.0" width="1.6" height="1.6" fill="#b8bcc4"/><rect x="805.7" y="316.0" width="1.6" height="1.6" fill="#b8bcc4"/><rect x="805.7" y="319.0" width="1.6" height="1.6" fill="#b8bcc4"/><rect x="816.5" y="327.0" width="9" height="9" fill="#8e9af0"/><rect x="816.5" y="341.6" width="9" height="8.5" fill="#c4cacd"/><path d="M818.3,345.85 h5.4 M821.0,343.1 v5.5" stroke="#1a1a1a" stroke-width="1.4"/><circle cx="765" cy="373.2" r="18.8" fill="#222933" stroke="#edcd5e" stroke-width="2.4"/><g transform="translate(765,373.2)"><path d="M0.3,-9.7 A9.7,9.7 0 0 1 0.3,9.7" stroke="#6f8fd0" stroke-width="1.5" fill="none"/><rect x="-10.3" y="-1.4" width="8.6" height="3.2" fill="#c8c8c8"/><polygon points="-2.1,-3.6 2,0.2 -2.1,4" fill="#c8c8c8"/></g><polygon points="966.5,332 972,332 969.25,336" fill="#a6adb8"/><rect x="1050.4" y="330.2" width="1.6" height="1.6" fill="#b8bcc4"/><rect x="1050.4" y="333.2" width="1.6" height="1.6" fill="#b8bcc4"/><rect x="1050.4" y="336.2" width="1.6" height="1.6" fill="#b8bcc4"/><rect x="1061.2" y="344.0" width="9" height="9" fill="#4fc8d2"/><rect x="1061.2" y="342.7" width="3" height="11.6" fill="#4fc8d2"/><rect x="1072.9" y="343.0" width="2.1" height="11" fill="#4fc8d2"/><rect x="1061.2" y="357.3" width="9" height="9" fill="#4fc8d2"/><rect x="1072.9" y="356.3" width="2.1" height="11" fill="#4fc8d2"/><rect x="1061.2" y="371.0" width="9" height="9" fill="#d8bc66"/><rect x="1072.9" y="370.0" width="2.1" height="11" fill="#d8bc66"/><rect x="950" y="385.59999999999997" width="9" height="9" fill="#8e9af0"/><rect x="950" y="398.7" width="9" height="9" fill="#d8bc66"/><rect x="950" y="412.5" width="9" height="9" fill="#4fc8d2"/><rect x="956" y="411.2" width="3" height="11.6" fill="#4fc8d2"/><rect x="945.7" y="411.5" width="2.1" height="11" fill="#4fc8d2"/><polygon points="956.7,311.5 959.7,314.5 956.7,317.5 953.7,314.5" fill="#7eaedc"/><polygon points="956.7,311.5 959.7,314.5 956.7,314.5" fill="#cfe4f5"/><circle cx="1009.8" cy="444.8" r="18.8" fill="#222933" stroke="#e4b076" stroke-width="2.4"/><g transform="translate(1009.8,444.8)"><rect x="-7.2" y="-8.4" width="12.3" height="15.5" fill="#7b9ad8"/><path d="M-4.8,-3.8 h8" stroke="#5068a8" stroke-width="1.4"/><path d="M-4.8,2.4 h8" stroke="#5068a8" stroke-width="1"/><rect x="-5" y="-1.8" width="8.6" height="2.4" fill="#d0d0d0" stroke="#2a2f3a" stroke-width="0.5"/><polygon points="3.3,-3.9 10.2,-0.6 3.3,2.7" fill="#d0d0d0"/></g><polygon points="970.8,504 976.3,504 973.55,508" fill="#a6adb8"/><rect x="1054.9" y="502.2" width="1.6" height="1.6" fill="#b8bcc4"/><rect x="1054.9" y="505.2" width="1.6" height="1.6" fill="#b8bcc4"/><rect x="1054.9" y="508.2" width="1.6" height="1.6" fill="#b8bcc4"/><rect x="1065.7" y="516.0" width="9" height="9" fill="#4fc8d2"/><rect x="1065.7" y="514.7" width="3" height="11.6" fill="#4fc8d2"/><rect x="1077.4" y="515.0" width="2.1" height="11" fill="#4fc8d2"/><rect x="1065.7" y="530.0" width="9" height="9" fill="#4fc8d2"/><rect x="1077.4" y="529.0" width="2.1" height="11" fill="#4fc8d2"/><rect x="1065.7" y="544.0" width="9" height="9" fill="#d8bc66"/><rect x="1077.4" y="543.0" width="2.1" height="11" fill="#d8bc66"/><rect x="954.3" y="557.3000000000001" width="9" height="9" fill="#8e9af0"/><rect x="954.3" y="571.2" width="9" height="9" fill="#d8bc66"/><rect x="954.3" y="584.5" width="9" height="9" fill="#4fc8d2"/><rect x="960.3" y="583.2" width="3" height="11.6" fill="#4fc8d2"/><rect x="950.0" y="583.5" width="2.1" height="11" fill="#4fc8d2"/><polygon points="961.7,483 964.7,486 961.7,489 958.7,486" fill="#7eaedc"/><polygon points="961.7,483 964.7,486 961.7,486" fill="#cfe4f5"/><circle cx="1014.5" cy="616.5" r="18.8" fill="#222933" stroke="#e4b076" stroke-width="2.4"/><g transform="translate(1014.5,616.5)"><rect x="-7.2" y="-8.4" width="12.3" height="15.5" fill="#7b9ad8"/><path d="M-4.8,-3.8 h8" stroke="#5068a8" stroke-width="1.4"/><path d="M-4.8,2.4 h8" stroke="#5068a8" stroke-width="1"/><rect x="-5" y="-1.8" width="8.6" height="2.4" fill="#d0d0d0" stroke="#2a2f3a" stroke-width="0.5"/><polygon points="3.3,-3.9 10.2,-0.6 3.3,2.7" fill="#d0d0d0"/></g><polygon points="970.4,676.2 975.9,676.2 973.15,680.2" fill="#a6adb8"/><rect x="1053.9" y="674.4000000000001" width="1.6" height="1.6" fill="#b8bcc4"/><rect x="1053.9" y="677.4000000000001" width="1.6" height="1.6" fill="#b8bcc4"/><rect x="1053.9" y="680.4000000000001" width="1.6" height="1.6" fill="#b8bcc4"/><rect x="1064.7" y="688.7" width="9" height="9" fill="#9ed468"/><rect x="1064.7" y="687.4000000000001" width="3" height="11.6" fill="#9ed468"/><rect x="1076.4" y="687.7" width="2.1" height="11" fill="#9ed468"/><rect x="1064.7" y="702.7" width="9" height="9" fill="#4fc8d2"/><rect x="1064.7" y="701.4000000000001" width="3" height="11.6" fill="#4fc8d2"/><rect x="1076.4" y="701.7" width="2.1" height="11" fill="#4fc8d2"/><rect x="953.9" y="716.0" width="9" height="9" fill="#8e9af0"/><rect x="953.9" y="729.5" width="9" height="9" fill="#4fc8d2"/><rect x="953.9" y="743.0" width="9" height="9" fill="#9ed468"/><rect x="949.6" y="742.0" width="2.1" height="11" fill="#9ed468"/><polygon points="960.7,655.7 963.7,658.7 960.7,661.7 957.7,658.7" fill="#7eaedc"/><polygon points="960.7,655.7 963.7,658.7 960.7,658.7" fill="#cfe4f5"/><circle cx="1013.8" cy="775.2" r="18.8" fill="#222933" stroke="#e4b076" stroke-width="2.4"/><g transform="translate(1013.8,775.2)"><rect x="-9.8" y="-9.4" width="18.8" height="19.2" rx="2" fill="#c6c6c6"/><rect x="-7.7" y="-6.6" width="10.2" height="3.8" rx="1" fill="#7b9ad8" stroke="#333" stroke-width="0.6"/><rect x="-3.8" y="2.9" width="10.3" height="4.1" rx="1" fill="#7b9ad8" stroke="#333" stroke-width="0.6"/><path d="M2.5,-4.7 h2.2 v4.6 h-11.5 v4.6 h2.5" stroke="#333" stroke-width="0.6" fill="none"/></g><polygon points="1218.9,371.2 1224.4,371.2 1221.65,375.2" fill="#a6adb8"/><rect x="1303.0000000000002" y="369.4" width="1.6" height="1.6" fill="#b8bcc4"/><rect x="1303.0000000000002" y="372.4" width="1.6" height="1.6" fill="#b8bcc4"/><rect x="1303.0000000000002" y="375.4" width="1.6" height="1.6" fill="#b8bcc4"/><rect x="1313.8000000000002" y="383.7" width="9" height="9" fill="#8e9af0"/><rect x="1325.5000000000002" y="382.7" width="2.1" height="11" fill="#8e9af0"/><rect x="1202.4" y="397.09999999999997" width="9" height="9" fill="#9ed468"/><rect x="1208.4" y="395.79999999999995" width="3" height="11.6" fill="#9ed468"/><rect x="1202.4" y="411.0" width="9" height="9" fill="#4fc8d2"/><rect x="1208.4" y="409.7" width="3" height="11.6" fill="#4fc8d2"/><rect x="1202.4" y="424.7" width="9" height="9" fill="#4fc8d2"/><rect x="1208.4" y="423.4" width="3" height="11.6" fill="#4fc8d2"/><polygon points="1209.4,350.4 1212.4,353.4 1209.4,356.4 1206.4,353.4" fill="#7eaedc"/><polygon points="1209.4,350.4 1212.4,353.4 1209.4,353.4" fill="#cfe4f5"/><circle cx="1262.3" cy="456.7" r="18.8" fill="#222933" stroke="#e4b076" stroke-width="2.4"/><g transform="translate(1262.3,456.7)"><polygon points="-0.8,-9.2 3.5,-4.9 -0.8,-0.6 -5.1,-4.9" fill="#7b9ad8"/><polygon points="-0.7,1.3 3.7,5.7 -0.7,10.1 -5.1,5.7" fill="#7b9ad8"/><polygon points="4.7,-4.1 9,0.3 4.7,4.6 0.4,0.3" fill="#7b9ad8" stroke="#212833" stroke-width="0.9"/><path d="M1.5,-5.5 h9.2 M6.1,-10.3 v9.6" stroke="#1e1e1e" stroke-width="3"/><path d="M1.5,-5.5 h9.2 M6.1,-10.3 v9.6" stroke="#d8d8d8" stroke-width="1.6"/></g><polygon points="1337.9,490 1343.4,490 1340.65,494" fill="#a6adb8"/><rect x="1421.9" y="488.2" width="1.6" height="1.6" fill="#b8bcc4"/><rect x="1421.9" y="491.2" width="1.6" height="1.6" fill="#b8bcc4"/><rect x="1421.9" y="494.2" width="1.6" height="1.6" fill="#b8bcc4"/><rect x="1432.7" y="502.0" width="9" height="9" fill="#8e9af0"/><rect x="1321.4" y="516.3000000000001" width="9" height="9" fill="#8e9af0"/><rect x="1321.4" y="529.3000000000001" width="9" height="9" fill="#4fc8d2"/><rect x="1321.4" y="543.2" width="9" height="9" fill="#9ed468"/><rect x="1327.4" y="541.9000000000001" width="3" height="11.6" fill="#9ed468"/><rect x="1317.1000000000001" y="542.2" width="2.1" height="11" fill="#9ed468"/><rect x="1321.4" y="557.1" width="9" height="9" fill="#4fc8d2"/><rect x="1327.4" y="555.8000000000001" width="3" height="11.6" fill="#4fc8d2"/><polygon points="1328.4,469.6 1331.4,472.6 1328.4,475.6 1325.4,472.6" fill="#7eaedc"/><polygon points="1328.4,469.6 1331.4,472.6 1328.4,472.6" fill="#cfe4f5"/><circle cx="1381.3" cy="589.2" r="18.8" fill="#222933" stroke="#e4b076" stroke-width="2.4"/><g transform="translate(1381.3,589.2)"><rect x="-9.8" y="-9.4" width="18.8" height="19.2" rx="2" fill="#c6c6c6"/><rect x="-7.7" y="-6.6" width="10.2" height="3.8" rx="1" fill="#7b9ad8" stroke="#333" stroke-width="0.6"/><rect x="-3.8" y="2.9" width="10.3" height="4.1" rx="1" fill="#7b9ad8" stroke="#333" stroke-width="0.6"/><path d="M2.5,-4.7 h2.2 v4.6 h-11.5 v4.6 h2.5" stroke="#333" stroke-width="0.6" fill="none"/></g><polygon points="1493.6,482 1499.1,482 1496.35,486" fill="#a6adb8"/><rect x="1578.2" y="480.2" width="1.6" height="1.6" fill="#b8bcc4"/><rect x="1578.2" y="483.2" width="1.6" height="1.6" fill="#b8bcc4"/><rect x="1578.2" y="486.2" width="1.6" height="1.6" fill="#b8bcc4"/><rect x="1477.1" y="494.2" width="9" height="9" fill="#8e9af0"/><rect x="1477.1" y="508.9" width="9" height="8.5" fill="#c4cacd"/><path d="M1478.8999999999999,513.15 h5.4 M1481.6,510.4 v5.5" stroke="#1a1a1a" stroke-width="1.4"/><circle cx="1537.5" cy="540.6" r="18.8" fill="#222933" stroke="#5cdc7c" stroke-width="2.4"/><g transform="translate(1537.5,540.6)"><path d="M-0.7,-9.55 A9.35,9.35 0 0 0 -0.7,9.15" stroke="#6f8fd0" stroke-width="1.5" fill="none"/><rect x="-2.6" y="-1.5" width="7.9" height="2.9" fill="#c8c8c8"/><polygon points="5.2,-3.6 9.6,-0.05 5.2,3.6" fill="#c8c8c8"/></g></svg>
</body></html>
